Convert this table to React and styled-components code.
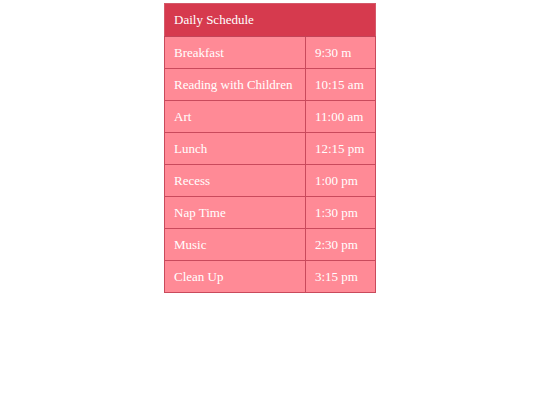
import styled, { createGlobalStyle } from "styled-components";

const GlobalStyle = createGlobalStyle`
  body {
    margin: 0;
    background: #ffffff;
    font-family: "Liberation Serif", "Times New Roman", serif;
  }
`;

const Table = styled.table`
  margin: 3px auto 0;
  border-collapse: collapse;
  border: 1px solid #d45a6a;
  font-size: 13px;
  color: #ffffff;
`;

const HeaderCell = styled.th`
  background: #d63a4e;
  height: 32px;
  padding: 0 9px;
  text-align: left;
  font-weight: normal;
  border-bottom: 1px solid #c24458;
`;

const Cell = styled.td`
  background: #ff8a96;
  height: 32px;
  padding: 0 9px;
  border: 1px solid #c94a5c;
  width: ${(p) => p.$w}px;
  box-sizing: border-box;
`;

const schedule = [
  ["Breakfast", "9:30 m"],
  ["Reading with Children", "10:15 am"],
  ["Art", "11:00 am"],
  ["Lunch", "12:15 pm"],
  ["Recess", "1:00 pm"],
  ["Nap Time", "1:30 pm"],
  ["Music", "2:30 pm"],
  ["Clean Up", "3:15 pm"],
];

export default function App() {
  return (
    <>
      <GlobalStyle />
      <Table>
        <thead>
          <tr>
            <HeaderCell colSpan={2}>Daily Schedule</HeaderCell>
          </tr>
        </thead>
        <tbody>
          {schedule.map(([activity, time]) => (
            <tr key={activity}>
              <Cell $w={141}>{activity}</Cell>
              <Cell $w={70}>{time}</Cell>
            </tr>
          ))}
        </tbody>
      </Table>
    </>
  );
}
